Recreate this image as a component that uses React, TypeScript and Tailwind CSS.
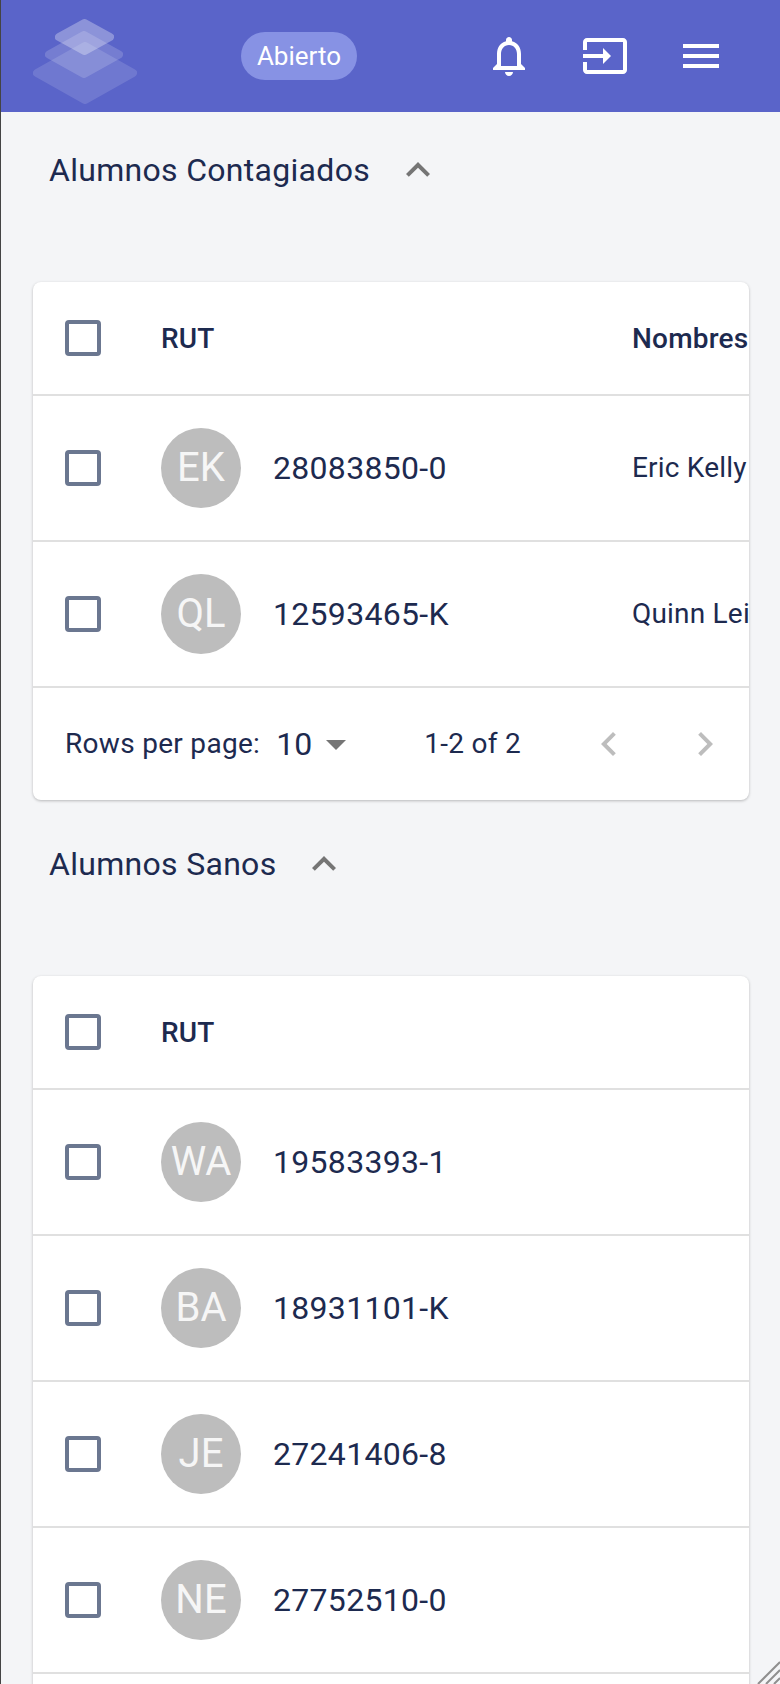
import React from "react";

const Icon = ({ d, className }: { d: string; className: string }) => (
  <svg viewBox="0 0 24 24" className={className} fill="currentColor">
    <path d={d} />
  </svg>
);

const Checkbox = () => (
  <div className="box-border w-9 h-9 rounded-[4px] border-[4px] border-[#6b7790] bg-white shrink-0" />
);

const Avatar = ({ text }: { text: string }) => (
  <div className="w-20 h-20 rounded-full bg-[#bdbdbd] text-[#f6f6f6] flex items-center justify-center text-[40px] shrink-0">
    {text}
  </div>
);

const Row = ({ ini, rut, name }: { ini: string; rut: string; name?: string }) => (
  <div className="flex items-center h-[146px] border-b-2 border-[#e0e0e0] box-border pl-[32px] whitespace-nowrap">
    <Checkbox />
    <div className="ml-[60px] w-[471px] shrink-0 flex items-center">
      <Avatar text={ini} />
      <span className="ml-8 text-[32px] tracking-[0.3px]">{rut}</span>
    </div>
    {name && <span className="text-[28px] tracking-[0.2px]">{name}</span>}
  </div>
);

const HeadRow = ({ nombres }: { nombres?: boolean }) => (
  <div className="flex items-center h-[114px] border-b-2 border-[#e0e0e0] box-border pl-[32px] whitespace-nowrap text-[28px] font-medium tracking-[0.2px]">
    <Checkbox />
    <div className="ml-[60px] w-[471px] shrink-0 pt-[2px]">RUT</div>
    {nombres && <span className="pt-[2px]">Nombres</span>}
  </div>
);

const Title = ({ text, cls }: { text: string; cls: string }) => (
  <div className={`flex items-center pl-[48px] ${cls}`}>
    <span className="text-[32px] tracking-[0.3px]">{text}</span>
    <Icon d="M12 8l-6 6 1.41 1.41L12 10.83l4.59 4.58L18 14z" className="w-12 h-12 ml-[24px] text-[#757575]" />
  </div>
);

const Diamond = ({ cx, cy, hw, hh, o }: { cx: number; cy: number; hw: number; hh: number; o: number }) => (
  <polygon
    points={`${cx},${cy - hh + 3} ${cx + hw - 4},${cy} ${cx},${cy + hh - 3} ${cx - hw + 4},${cy}`}
    fill="#fff"
    stroke="#fff"
    strokeWidth="8"
    strokeLinejoin="round"
    opacity={o}
  />
);

export default function App() {
  return (
    <div
      className="relative w-[780px] h-[1684px] overflow-hidden bg-[#f4f5f7] border-l border-[#444] box-border text-[#1d2a4f]"
      style={{ fontFamily: "Roboto, sans-serif" }}
    >
      <header className="h-[112px] bg-[#5a64c9] flex items-center text-white">
        <svg viewBox="28 6 110 100" className="w-[110px] h-[100px] ml-[27px] shrink-0">
          <Diamond cx={85} cy={73} hw={52} hh={30} o={0.13} />
          <Diamond cx={84} cy={54.5} hw={39} hh={22.5} o={0.16} />
          <Diamond cx={84.5} cy={37} hw={29.5} hh={17} o={0.3} />
        </svg>
        <div className="ml-[103px] w-[116px] h-[48px] rounded-full bg-[#8792e4] flex items-center justify-center text-[26px] shrink-0">
          Abierto
        </div>
        <Icon
          d="M12 22c1.1 0 2-.9 2-2h-4c0 1.1.9 2 2 2zm6-6v-5c0-3.07-1.63-5.64-4.5-6.32V4c0-.83-.67-1.5-1.5-1.5s-1.5.67-1.5 1.5v.68C7.64 5.36 6 7.92 6 11v5l-2 2v1h16v-1l-2-2zm-2 1H8v-6c0-2.48 1.51-4.5 4-4.5s4 2.02 4 4.5v6z"
          className="w-12 h-12 ml-[128px] shrink-0"
        />
        <Icon
          d="M21 3.01H3c-1.1 0-2 .9-2 2V9h2V4.99h18v14.03H3V15H1v4.01c0 1.1.9 1.98 2 1.98h18c1.1 0 2-.88 2-1.98v-14c0-1.11-.9-2-2-2zM11 16l4-4-4-4v3H1v2h10v3z"
          className="w-12 h-12 ml-12 shrink-0"
        />
        <Icon d="M3 18h18v-2H3v2zm0-5h18v-2H3v2zm0-7v2h18V6H3z" className="w-12 h-12 ml-12 shrink-0" />
      </header>

      <Title text="Alumnos Contagiados" cls="h-[116px]" />
      <section className="mt-[54px] ml-[32px] w-[716px] bg-white rounded-[8px] overflow-hidden shadow-[0_1px_3px_rgba(0,0,0,0.25)]">
        <HeadRow nombres />
        <Row ini="EK" rut="28083850-0" name="Eric Kelly" />
        <Row ini="QL" rut="12593465-K" name="Quinn Leighton" />
        <div className="h-[112px] flex items-center whitespace-nowrap text-[28px] tracking-[0.3px]">
          <span className="ml-[32px]">Rows per page:</span>
          <span className="ml-[16px] text-[32px] tracking-normal">10</span>
          <Icon d="M7 10l5 5 5-5z" className="w-12 h-12 text-[#757575]" />
          <span className="ml-[64px]">1-2 of 2</span>
          <Icon d="M15.41 7.41L14 6l-6 6 6 6 1.41-1.41L10.83 12z" className="w-12 h-12 ml-[64px] text-[#bdbdbd]" />
          <Icon d="M10 6L8.59 7.41 13.17 12l-4.58 4.59L10 18l6-6z" className="w-12 h-12 ml-12 text-[#bdbdbd]" />
        </div>
      </section>

      <Title text="Alumnos Sanos" cls="h-[128px]" />
      <section className="mt-[48px] ml-[32px] w-[716px] bg-white rounded-[8px] overflow-hidden shadow-[0_1px_3px_rgba(0,0,0,0.25)]">
        <HeadRow />
        <Row ini="WA" rut="19583393-1" />
        <Row ini="BA" rut="18931101-K" />
        <Row ini="JE" rut="27241406-8" />
        <Row ini="NE" rut="27752510-0" />
        <div className="h-[146px]" />
      </section>

      <svg viewBox="0 0 24 24" className="absolute right-0 bottom-0 w-6 h-6" stroke="#8f8f8f" strokeWidth="2" fill="none">
        <path d="M2 24 L24 2 M10 24 L24 10 M18 24 L24 18" />
      </svg>
    </div>
  );
}
